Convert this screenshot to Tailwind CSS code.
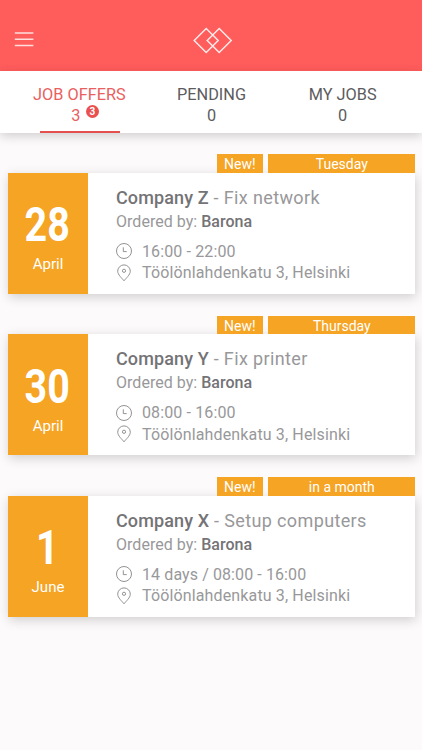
<!DOCTYPE html>
<html lang="en">
<head>
<meta charset="utf-8">
<title>Job offers</title>
<script src="https://cdn.jsdelivr.net/npm/@tailwindcss/browser@4"></script>
</head>
<body class="w-[422px] h-[750px] overflow-hidden bg-[#fcfafb] font-['Roboto',sans-serif]">
<svg class="hidden">
  <symbol id="clock" viewBox="0 0 16 16"><circle cx="8" cy="8" r="7.5"/><path d="M7.300 4.300v4.300h3.400"/></symbol>
  <symbol id="pin" viewBox="0 0 16 18"><path d="M8 16.800C6.200 14.400 1.700 10.800 1.700 7.200a6.300 6.300 0 0 1 12.600 0c0 3.600-4.500 7.200-6.300 9.600z"/><circle cx="8" cy="6.800" r="1.600"/></symbol>
</svg>
<header class="h-[71px] bg-[#ff5c5c] grid grid-cols-3 items-start pt-[26px]">
  <svg class="ml-[14px] mt-[5px]" width="20" height="17" fill="none" stroke="#ffdede" stroke-width="1.600"><path d="M.8 2h18.600M.8 8.300h18.600M.8 14.500h18.600"/></svg>
  <svg class="justify-self-center ml-[5px]" width="40" height="30" fill="none" stroke="#ffeaea" stroke-width="1.500"><path d="M1.200 14.500L13.200 2.500 25.200 14.500 13.200 26.500zM14.200 14.500L26.200 2.500 38.200 14.500 26.200 26.500z"/></svg>
</header>
<nav class="h-[62px] bg-white shadow-[0_3px_10px_rgba(0,0,0,0.18)] flex px-[14px] text-center text-[16.300px] leading-[21px] text-[#5c5b5e]">
  <div class="w-[132px] pt-[13px] text-[#e9605f] flex flex-col items-center">
    <div class="pr-[1px]">JOB OFFERS</div>
    <div class="relative w-[80px] h-[28px] border-b-2 border-[#e4504f] pr-[8px]">3<span class="absolute left-[46px] top-0 size-[13px] rounded-full bg-[#ea5050] text-white text-[10px] leading-[13px] font-bold">3</span></div>
  </div>
  <div class="w-[131px] pt-[13px] pl-px"><div>PENDING</div><div>0</div></div>
  <div class="w-[132px] pt-[13px] pl-px"><div>MY JOBS</div><div>0</div></div>
</nav>
<main class="pt-[21.300px] pl-[8px] pr-[6.700px] flex flex-col gap-[22.200px]">
  <section>
    <div class="h-[18.300px] flex justify-end gap-[5.500px] text-center text-white text-[14px] leading-[20px]"><div class="w-[46px] bg-[#f5a424]">New!</div><div class="w-[147px] bg-[#f5a424]">Tuesday</div></div>
    <article class="h-[121px] flex bg-white shadow-[1px_3px_11px_rgba(0,0,0,0.18)]">
      <div class="w-[80px] bg-[#f5a424] text-white text-center pt-[29.500px]"><div class="text-[48px] leading-[46px] font-bold scale-x-[0.82]"><span class="relative -left-[1px]">28</span></div><div class="text-[15px] leading-[20px] mt-[6px]">April</div></div>
      <div class="pl-[28px] pt-[13px] text-[#98989a] whitespace-nowrap">
        <div class="text-[18px] leading-[24px] tracking-[0.370px]"><span class="font-medium text-[#747376] tracking-[0.120px]">Company Z</span> - Fix network</div>
        <div class="text-[16px] leading-[24px] tracking-[0.030px]">Ordered by: <span class="font-medium text-[#747376]">Barona</span></div>
        <div class="mt-[7px] flex items-center gap-[10px] text-[16px] leading-[21.500px] tracking-[0.120px]"><svg class="w-4 h-4 fill-none stroke-[#929294]"><use href="#clock"/></svg><span>16:00 - 22:00</span></div>
        <div class="flex items-center gap-[10px] text-[16px] leading-[21.500px] tracking-[0.140px]"><svg class="w-4 h-[18px] fill-none stroke-[#929294]"><use href="#pin"/></svg><span>Töölönlahdenkatu 3, Helsinki</span></div>
      </div>
    </article>
  </section>
  <section>
    <div class="h-[18.300px] flex justify-end gap-[5.500px] text-center text-white text-[14px] leading-[20px]"><div class="w-[46px] bg-[#f5a424]">New!</div><div class="w-[147px] bg-[#f5a424]">Thursday</div></div>
    <article class="h-[121px] flex bg-white shadow-[1px_3px_11px_rgba(0,0,0,0.18)]">
      <div class="w-[80px] bg-[#f5a424] text-white text-center pt-[29.500px]"><div class="text-[48px] leading-[46px] font-bold scale-x-[0.82]"><span class="relative -left-[1px]">30</span></div><div class="text-[15px] leading-[20px] mt-[6px]">April</div></div>
      <div class="pl-[28px] pt-[13px] text-[#98989a] whitespace-nowrap">
        <div class="text-[18px] leading-[24px] tracking-[0.370px]"><span class="font-medium text-[#747376] tracking-[0.120px]">Company Y</span> - Fix printer</div>
        <div class="text-[16px] leading-[24px] tracking-[0.030px]">Ordered by: <span class="font-medium text-[#747376]">Barona</span></div>
        <div class="mt-[7px] flex items-center gap-[10px] text-[16px] leading-[21.500px] tracking-[0.120px]"><svg class="w-4 h-4 fill-none stroke-[#929294]"><use href="#clock"/></svg><span>08:00 - 16:00</span></div>
        <div class="flex items-center gap-[10px] text-[16px] leading-[21.500px] tracking-[0.140px]"><svg class="w-4 h-[18px] fill-none stroke-[#929294]"><use href="#pin"/></svg><span>Töölönlahdenkatu 3, Helsinki</span></div>
      </div>
    </article>
  </section>
  <section>
    <div class="h-[18.300px] flex justify-end gap-[5.500px] text-center text-white text-[14px] leading-[20px]"><div class="w-[46px] bg-[#f5a424]">New!</div><div class="w-[147px] bg-[#f5a424]">in a month</div></div>
    <article class="h-[121px] flex bg-white shadow-[1px_3px_11px_rgba(0,0,0,0.18)]">
      <div class="w-[80px] bg-[#f5a424] text-white text-center pt-[29.500px]"><div class="text-[48px] leading-[46px] font-bold scale-x-[0.82]"><span class="relative -left-[1px]">1</span></div><div class="text-[15px] leading-[20px] mt-[6px]">June</div></div>
      <div class="pl-[28px] pt-[13px] text-[#98989a] whitespace-nowrap">
        <div class="text-[18px] leading-[24px] tracking-[0.370px]"><span class="font-medium text-[#747376] tracking-[0.120px]">Company X</span> - Setup computers</div>
        <div class="text-[16px] leading-[24px] tracking-[0.030px]">Ordered by: <span class="font-medium text-[#747376]">Barona</span></div>
        <div class="mt-[7px] flex items-center gap-[10px] text-[16px] leading-[21.500px] tracking-[0.100px]"><svg class="w-4 h-4 fill-none stroke-[#929294]"><use href="#clock"/></svg><span>14 days / 08:00 - 16:00</span></div>
        <div class="flex items-center gap-[10px] text-[16px] leading-[21.500px] tracking-[0.140px]"><svg class="w-4 h-[18px] fill-none stroke-[#929294]"><use href="#pin"/></svg><span>Töölönlahdenkatu 3, Helsinki</span></div>
      </div>
    </article>
  </section>
</main>
</body>
</html>
